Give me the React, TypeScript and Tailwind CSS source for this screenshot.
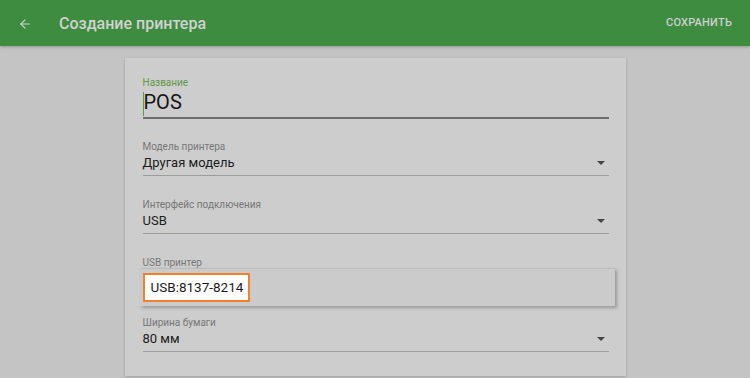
import { ArrowLeft } from 'lucide-react';

const font = { fontFamily: 'Roboto, "Noto Sans", sans-serif' };

function Caret() {
  return (
    <svg width="8" height="4" viewBox="0 0 8 4" className="absolute right-[4px] bottom-[11px]">
      <path d="M0 0h8L4 4z" fill="#454545" />
    </svg>
  );
}

function SelectField({ label, value, pt = 'pt-[22px]' }: { label: string; value: string; pt?: string }) {
  return (
    <div className={`relative ${pt}`}>
      <div className="text-[10px] leading-[12px] text-[#777777]">{label}</div>
      <div className="mt-px pb-[3px] text-[13px] leading-[18px] text-[#1c1c1c] border-b border-[#9c9c9c]">
        {value}
      </div>
      <Caret />
    </div>
  );
}

export default function App() {
  return (
    <div className="flex h-[378px] w-[750px] flex-col overflow-hidden bg-[#c4c4c4]" style={font}>
      <header className="z-10 flex h-[46px] shrink-0 items-center justify-between bg-[#3d8c40] pl-[18px] pr-[18px] pt-[1px] shadow-[0_1px_3px_rgba(0,0,0,0.25)]">
        <div className="flex items-center">
          <ArrowLeft className="h-[14px] w-[14px] text-[#cfcfcf]" strokeWidth={2} />
          <span className="ml-[27px] text-[16px] font-medium text-[#d2d2d2]">Создание принтера</span>
        </div>
        <span className="text-[11px] font-medium tracking-[0.2px] text-[#cfcfcf]">СОХРАНИТЬ</span>
      </header>

      <main className="flex-1 pt-[12px]">
        <div className="mx-auto w-[501px] bg-[#cdcdcd] px-[18px] pb-[24px] pr-[17px] shadow-[0_1px_3px_rgba(0,0,0,0.2)]">
          {/* name */}
          <div className="pt-[19px]">
            <div className="text-[10px] leading-[12px] text-[#5f9a45]">Название</div>
            <div className="relative mt-px pb-[3px] border-b-2 border-[#6e6e6e]">
              <span className="absolute left-0 top-[2px] h-[24px] w-px bg-[#5f9a45]" />
              <div className="pl-[1px] text-[20px] leading-[24px] text-[#161616]">POS</div>
            </div>
          </div>

          <SelectField label="Модель принтера" value="Другая модель" />
          <SelectField label="Интерфейс подключения" value="USB" pt="pt-[23px]" />

          {/* usb printer */}
          <div className="pt-[23px]">
            <div className="text-[10px] leading-[11px] text-[#777777]">USB принтер</div>
            <div className="-ml-[3px] flex h-[38px] w-[475px] items-center border-t border-[#bdbdbd] bg-[#cbcbcb] pl-[3px] shadow-[2px_2px_3px_rgba(0,0,0,0.25)]">
              <div className="flex h-[29px] w-[107px] items-center border-2 border-[#f0802a] bg-white pl-[6px] text-[13.5px] text-[#1c1c1c]">
                USB:8137-8214
              </div>
            </div>
          </div>

          <SelectField label="Ширина бумаги" value="80 мм" pt="pt-[11px]" />
        </div>
      </main>
    </div>
  );
}
